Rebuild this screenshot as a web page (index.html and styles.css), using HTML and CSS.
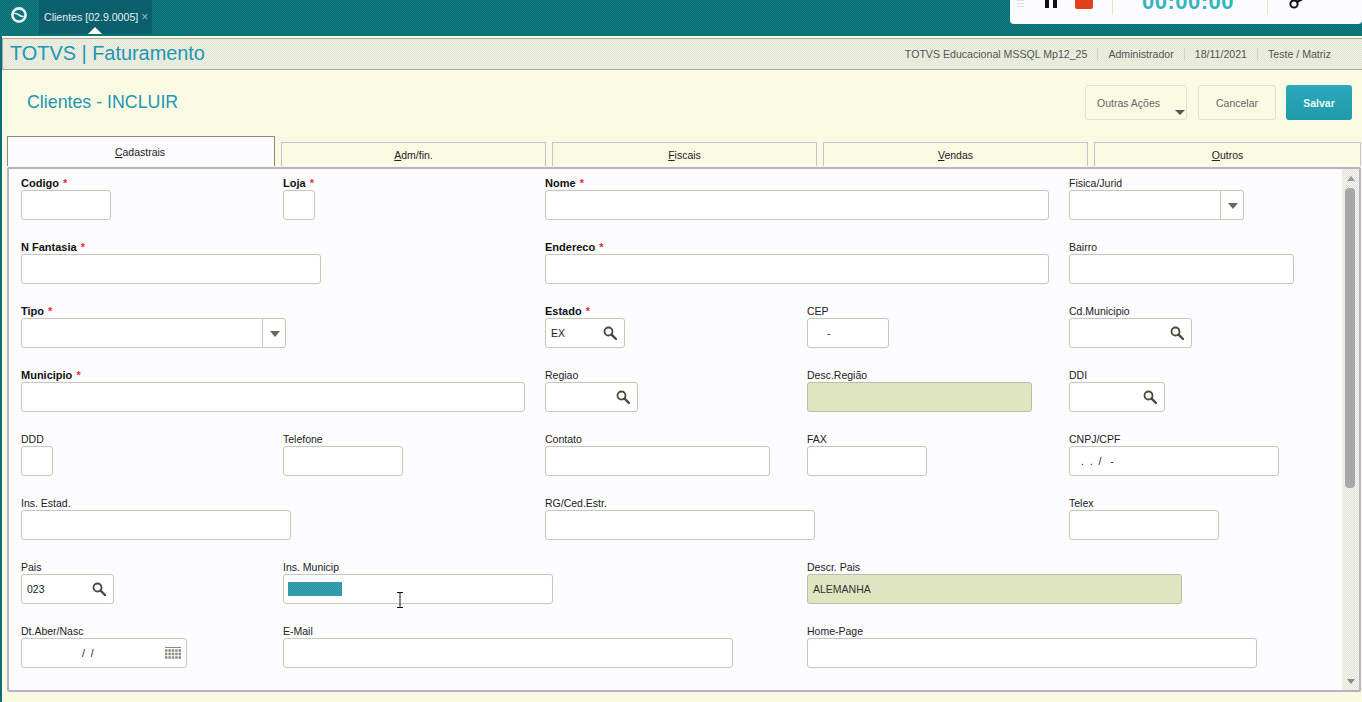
FILE: index.html
```html
<!DOCTYPE html>
<html lang="pt-BR">
<head>
    <meta charset="UTF-8">
    <meta name="viewport" content="width=device-width, initial-scale=1.0">
    <title>Clientes - INCLUIR</title>
    <link rel="stylesheet" href="styles.css">
</head>
<body>
    <svg class="icon-defs" width="0" height="0">
        <symbol id="lupa" viewBox="0 0 14 14">
            <circle cx="5.5" cy="5.5" r="4" fill="#fff" stroke="#4a4a3c" stroke-width="1.8"/>
            <path d="M8.6 8.6 L13 13" stroke="#4a4a3c" stroke-width="2.4" stroke-linecap="round"/>
        </symbol>
    </svg>

    <div class="topbar">
        <svg class="logo" viewBox="0 0 18 18" width="18" height="18">
            <circle cx="9" cy="9" r="6.6" fill="none" stroke="#e8f4f4" stroke-width="2.6"/>
            <path d="M4.5 8 C7 5.5 11 12.5 13.5 10" fill="none" stroke="#e8f4f4" stroke-width="1.6"/>
        </svg>
        <div class="tab-app">Clientes [02.9.0005] <span class="tab-close">×</span></div>
    </div>

    <div class="recorder">
        <div class="rec-grip"></div>
        <div class="rec-pause"><span></span><span></span></div>
        <div class="rec-stop"></div>
        <div class="rec-sep rec-sep-a"></div>
        <div class="rec-time">00:00:00</div>
        <div class="rec-sep rec-sep-b"></div>
        <svg class="rec-pen" viewBox="0 0 20 12" width="20" height="12">
            <circle cx="6" cy="4" r="3.6" fill="none" stroke="#111" stroke-width="2"/>
            <path d="M9 2 L16 -2" stroke="#111" stroke-width="2.4"/>
        </svg>
    </div>

    <div class="app">
        <div class="appbar">
            <div class="brand">TOTVS | Faturamento</div>
            <div class="app-info">
                <span>TOTVS Educacional MSSQL Mp12_25</span>
                <span>Administrador</span>
                <span>18/11/2021</span>
                <span>Teste / Matriz</span>
            </div>
        </div>

        <div class="page-head">
            <h1>Clientes - INCLUIR</h1>
            <div class="actions">
                <button class="btn btn-more">Outras Ações<i class="caret"></i></button>
                <button class="btn btn-cancel">Cancelar</button>
                <button class="btn btn-save">Salvar</button>
            </div>
        </div>

        <div class="tabs">
            <div class="tab active"><u>C</u>adastrais</div>
            <div class="tab"><u>A</u>dm/fin.</div>
            <div class="tab"><u>F</u>iscais</div>
            <div class="tab"><u>V</u>endas</div>
            <div class="tab tab-last"><u>O</u>utros</div>
        </div>

        <div class="panel">
            <div class="form">
                <!-- linha 1 -->
                <div class="field c1"><label class="req">Codigo <em>*</em></label><div class="input w90"></div></div>
                <div class="field c2"><label class="req">Loja <em>*</em></label><div class="input w32"></div></div>
                <div class="field c3"><label class="req">Nome <em>*</em></label><div class="input w504"></div></div>
                <div class="field c5"><label>Fisica/Jurid</label><div class="input w175 combo"><i class="arrow"></i></div></div>
                <!-- linha 2 -->
                <div class="field c1"><label class="req">N Fantasia <em>*</em></label><div class="input w300"></div></div>
                <div class="field c3"><label class="req">Endereco <em>*</em></label><div class="input w504"></div></div>
                <div class="field c5"><label>Bairro</label><div class="input w225"></div></div>
                <!-- linha 3 -->
                <div class="field c1"><label class="req">Tipo <em>*</em></label><div class="input w265 combo"><i class="arrow"></i></div></div>
                <div class="field c3"><label class="req">Estado <em>*</em></label><div class="input w80 lookup">EX<svg class="lupa"><use href="#lupa"/></svg></div></div>
                <div class="field c4"><label>CEP</label><div class="input w82 mask-cep">-</div></div>
                <div class="field c5"><label>Cd.Municipio</label><div class="input w123 lookup"><svg class="lupa"><use href="#lupa"/></svg></div></div>
                <!-- linha 4 -->
                <div class="field c1"><label class="req">Municipio <em>*</em></label><div class="input w504"></div></div>
                <div class="field c3"><label>Regiao</label><div class="input w93 lookup"><svg class="lupa"><use href="#lupa"/></svg></div></div>
                <div class="field c4"><label>Desc.Região</label><div class="input w225 disabled"></div></div>
                <div class="field c5"><label>DDI</label><div class="input w96 lookup"><svg class="lupa"><use href="#lupa"/></svg></div></div>
                <!-- linha 5 -->
                <div class="field c1"><label>DDD</label><div class="input w32"></div></div>
                <div class="field c2"><label>Telefone</label><div class="input w120"></div></div>
                <div class="field c3"><label>Contato</label><div class="input w225"></div></div>
                <div class="field c4"><label>FAX</label><div class="input w120"></div></div>
                <div class="field c5"><label>CNPJ/CPF</label><div class="input w210 mask-cnpj">.&nbsp;&nbsp;.&nbsp;&nbsp;/&nbsp;&nbsp;&nbsp;-</div></div>
                <!-- linha 6 -->
                <div class="field c1"><label>Ins. Estad.</label><div class="input w270"></div></div>
                <div class="field c3"><label>RG/Ced.Estr.</label><div class="input w270"></div></div>
                <div class="field c5"><label>Telex</label><div class="input w150"></div></div>
                <!-- linha 7 -->
                <div class="field c1"><label>Pais</label><div class="input w93 lookup">023<svg class="lupa"><use href="#lupa"/></svg></div></div>
                <div class="field c2"><label>Ins. Municip</label><div class="input w270 focused"><span class="selection"></span></div></div>
                <div class="field c4"><label>Descr. Pais</label><div class="input w375 disabled">ALEMANHA</div></div>
                <!-- linha 8 -->
                <div class="field c1"><label>Dt.Aber/Nasc</label>
                    <div class="input w166 date">/&nbsp;&nbsp;/
                        <svg class="calendar" viewBox="0 0 16 14" width="16" height="14">
                            <path d="M0 .5 H16" stroke="#8a8a80"/>
                            <path d="M0 3.5 H16 M0 7 H16 M0 10.5 H16" stroke="#8a8a80" stroke-width="2.4" stroke-dasharray="2.4 1"/>
                        </svg>
                    </div>
                </div>
                <div class="field c2"><label>E-Mail</label><div class="input w450"></div></div>
                <div class="field c4"><label>Home-Page</label><div class="input w450"></div></div>
            </div>

            <div class="scrollbar">
                <i class="sb-up"></i>
                <div class="sb-thumb"></div>
                <i class="sb-down"></i>
            </div>

            <!-- cursor do mouse -->
            <svg class="cursor" viewBox="0 0 8 16" width="8" height="16">
                <path d="M1 .5 H7 M4 .5 V15.5 M1 15.5 H7" stroke="#111" fill="none"/>
            </svg>
        </div>
    </div>
</body>
</html>
```

FILE: styles.css
```css
* {
    box-sizing: border-box;
}

html, body {
    margin: 0;
    height: 702px;
    overflow: hidden;
}

body {
    position: relative;
    background: #0b6f78;
    font-family: "Liberation Sans", Arial, sans-serif;
    font-size: 11px;
    color: #222;
}

.icon-defs {
    position: absolute;
}

.topbar {
    height: 36px;
    display: flex;
    align-items: flex-start;
    background: repeating-conic-gradient(#0a6a74 0 25%, #10807f 0 50%) 0 0 / 2px 2px;
}

.logo {
    margin: 6px 0 0 10px;
}

.tab-app {
    margin-left: 11px;
    width: 113px;
    height: 34px;
    padding-top: 10px;
    padding-left: 5px;
    font-size: 10.6px;
    white-space: nowrap;
    color: #e4eeee;
    background: #0b5f6d;
    position: relative;
}

.tab-app::after {
    content: "";
    position: absolute;
    left: 49px;
    bottom: 0;
    border-left: 7px solid transparent;
    border-right: 7px solid transparent;
    border-bottom: 7px solid #fdfdf0;
}

.tab-close {
    color: #9fb8bc;
    font-size: 12px;
}

/* widget do gravador por cima da tela */
.recorder {
    position: absolute;
    top: 0;
    left: 1010px;
    width: 352px;
    height: 24px;
    background: #fcfcff;
    border-radius: 0 0 4px 4px;
    overflow: hidden;
}

.rec-grip {
    position: absolute;
    left: 7px;
    top: 0;
    width: 7px;
    height: 8px;
    background: repeating-linear-gradient(#dcdce4 0 1px, transparent 1px 3px);
}

.rec-pause {
    position: absolute;
    left: 35px;
    top: 0;
    display: flex;
    gap: 4px;
}

.rec-pause span {
    width: 4px;
    height: 8px;
    background: #111;
}

.rec-stop {
    position: absolute;
    left: 65px;
    top: 0;
    width: 18px;
    height: 9px;
    background: #e0401c;
    border-radius: 0 0 2px 2px;
}

.rec-sep {
    position: absolute;
    top: 0;
    width: 1px;
    height: 15px;
    background: #e8e4c8;
}

.rec-sep-a {
    left: 102px;
}

.rec-sep-b {
    left: 257px;
}

.rec-time {
    position: absolute;
    left: 132px;
    top: -11px;
    font-size: 22px;
    font-weight: bold;
    letter-spacing: 0.5px;
    color: #35b5c0;
}

.rec-pen {
    position: absolute;
    left: 278px;
    top: 0;
}

.app {
    height: 666px;
    margin-left: 2px;
    padding-top: 2px;
    background: repeating-conic-gradient(#fdfdcc 0 25%, #f8f8fc 0 50%) 0 0 / 2px 2px;
}

.appbar {
    height: 32px;
    display: flex;
    align-items: center;
    justify-content: space-between;
    padding: 0 31px 2px 7px;
    border-top: 1px solid #a8a89a;
    border-bottom: 1px solid #a8a89a;
    border-left: 1px solid #a8a89a;
    background: repeating-conic-gradient(#f0f2d0 0 25%, #dfe4e8 0 50%) 0 0 / 2px 2px;
}

.brand {
    font-size: 19.9px;
    color: #2196b4;
}

.app-info {
    display: flex;
    color: #555;
    font-size: 10.6px;
    margin-top: 2px;
}

.app-info span {
    padding: 0 10px;
    border-right: 1px solid #d4d4c0;
}

.app-info span:last-child {
    border-right: 0;
    padding-right: 0;
}

.page-head {
    height: 66px;
    display: flex;
    align-items: center;
    justify-content: space-between;
    padding: 0 10px 0 25px;
}

.page-head h1 {
    margin: -1px 0 0;
    font-size: 17.8px;
    font-weight: normal;
    color: #2196b4;
}

.actions {
    display: flex;
    align-items: center;
    margin-top: -1px;
}

.btn {
    height: 35px;
    border: 1px solid #e0e0d8;
    border-radius: 3px;
    background: transparent;
    font: 10.5px "Liberation Sans", Arial, sans-serif;
    color: #666;
    padding: 0;
}

.btn-more {
    width: 102px;
    position: relative;
    text-align: left;
    padding-left: 11px;
}

.caret {
    position: absolute;
    right: 1px;
    bottom: 4px;
    border-left: 5px solid transparent;
    border-right: 5px solid transparent;
    border-top: 5px solid #555;
}

.btn-cancel {
    width: 78px;
    margin-left: 11px;
}

.btn-save {
    width: 66px;
    margin-left: 10px;
    border: 0;
    color: #e8fbfb;
    font-weight: bold;
    background: linear-gradient(#2aa8bd, #1f9aa8);
}

.tabs {
    display: flex;
    gap: 6px;
    align-items: flex-end;
    height: 30px;
    padding-left: 5px;
}

.tab {
    width: 265px;
    height: 24px;
    padding-top: 6px;
    text-align: center;
    font-size: 10.5px;
    color: #222;
    border: 1px solid #c4c4d0;
    border-bottom: 0;
}

.tab-last {
    width: 267px;
}

.tab.active {
    width: 268px;
    height: 30px;
    padding-top: 9px;
    padding-right: 2px;
    background: #fcfcff;
    border: 1px solid #8a8a7c;
    border-bottom: 0;
}

.panel {
    position: relative;
    margin: 1px 0 0 5px;
    width: 1354px;
    height: 525px;
    padding: 8px 0 0 12px;
    background: #fcfcff;
    border: 2px solid #b4b4c6;
    border-radius: 2px;
}

.form {
    display: grid;
    grid-template-columns: repeat(5, 262px);
    grid-auto-rows: 64px;
}

.field {
    min-width: 0;
}

.c1 { grid-column: 1; }
.c2 { grid-column: 2; }
.c3 { grid-column: 3; }
.c4 { grid-column: 4; }
.c5 { grid-column: 5; }

.field label {
    display: block;
    height: 12px;
    font-size: 10.5px;
    line-height: 12px;
    color: #222;
    white-space: nowrap;
}

.field label.req {
    font-weight: bold;
    font-size: 11px;
    color: #111;
}

.field label em {
    margin-left: 1px;
    color: #e0303a;
    font-style: normal;
}

.input {
    position: relative;
    height: 30px;
    margin-top: 1px;
    padding: 0 5px;
    line-height: 29px;
    font-size: 10.5px;
    background: #fefefe;
    border: 1px solid #c8c8b8;
    border-radius: 3px;
}

.w32 { width: 32px; }
.w80 { width: 80px; }
.w82 { width: 82px; }
.w90 { width: 90px; }
.w93 { width: 93px; }
.w96 { width: 96px; }
.w120 { width: 120px; }
.w123 { width: 123px; }
.w150 { width: 150px; }
.w166 { width: 166px; }
.w175 { width: 175px; }
.w210 { width: 210px; }
.w225 { width: 225px; }
.w265 { width: 265px; }
.w270 { width: 270px; }
.w300 { width: 300px; }
.w375 { width: 375px; }
.w450 { width: 450px; }
.w504 { width: 504px; }

.combo::after {
    content: "";
    position: absolute;
    top: 0;
    bottom: 0;
    right: 22px;
    width: 1px;
    background: #c8c8b8;
}

.arrow {
    position: absolute;
    right: 5px;
    top: 12px;
    border-left: 5px solid transparent;
    border-right: 5px solid transparent;
    border-top: 6px solid #6a6a5c;
}

.lupa {
    position: absolute;
    right: 7px;
    top: 7px;
    width: 14px;
    height: 14px;
}

.disabled {
    border-color: #bcbca8;
    background: repeating-conic-gradient(#e8eab4 0 25%, #d8e0d0 0 50%) 0 0 / 2px 2px;
    color: #333;
}

.mask-cep {
    padding-left: 19px;
}

.mask-cnpj {
    padding-left: 11px;
}

.date {
    padding-left: 60px;
}

.calendar {
    position: absolute;
    right: 5px;
    top: 8px;
}

.selection {
    position: absolute;
    left: 4px;
    top: 7px;
    width: 54px;
    height: 14px;
    background: repeating-conic-gradient(#2b94a8 0 25%, #3aa2ae 0 50%) 0 0 / 2px 2px;
}

.scrollbar {
    position: absolute;
    top: 0;
    right: 0;
    bottom: 0;
    width: 17px;
    background: repeating-conic-gradient(#fdfdd8 0 25%, #dcdcf0 0 50%) 0 0 / 2px 2px;
    display: flex;
    flex-direction: column;
    align-items: center;
}

.sb-up {
    margin-top: 7px;
    border-left: 4px solid transparent;
    border-right: 4px solid transparent;
    border-bottom: 5px solid #999;
}

.sb-thumb {
    width: 10px;
    height: 300px;
    margin-top: 7px;
    margin-right: 1px;
    background: #a8a8a8;
    border-radius: 4px;
}

.sb-down {
    margin-top: auto;
    margin-bottom: 6px;
    border-left: 4px solid transparent;
    border-right: 4px solid transparent;
    border-top: 5px solid #888;
}

.cursor {
    position: absolute;
    left: 387px;
    top: 423px;
}
```
